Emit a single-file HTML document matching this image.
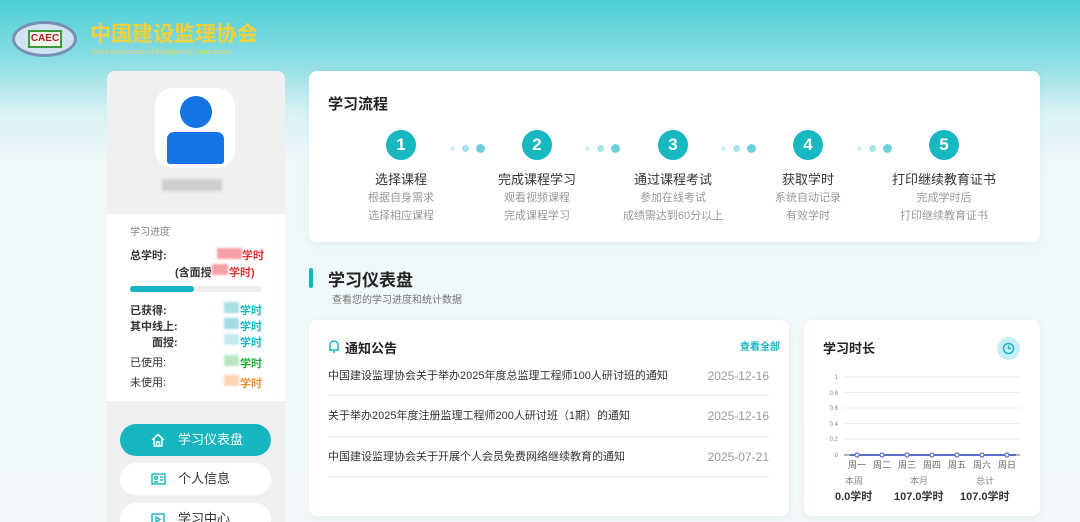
<!DOCTYPE html>
<html style="background:#f2f8f9"><head><meta charset="utf-8"><style>
*{margin:0;padding:0;box-sizing:border-box}
html,body{width:1080px;height:522px;overflow:hidden}
body{position:relative;font-family:"Liberation Sans","Noto Sans CJK SC",sans-serif;background:linear-gradient(180deg,#4ccfd8 0px,#8adde3 60px,#d6f2f4 110px,#eef8f9 160px,#f2f8f9 522px) no-repeat;background-size:1080px 522px;color:#333}
.a{position:absolute}
.card{position:absolute;background:#fff;border-radius:8px;box-shadow:0 2px 8px rgba(0,80,90,.06)}
.step{position:absolute;width:150px;text-align:center}
.circ{width:30px;height:30px;border-radius:50%;background:#17b8c2;color:#fff;font-weight:bold;font-size:17px;line-height:30px;margin:0 auto}
.st{font-size:13px;color:#333;margin-top:9px;line-height:18px}
.sd{font-size:11px;color:#999;line-height:18px}
.dots{position:absolute;top:140px}
.dots i{display:inline-block;border-radius:50%;margin-right:7px;vertical-align:middle}
.lbl{position:absolute;font-size:11px;font-weight:bold;color:#333}
.blur{position:absolute;height:11px;filter:blur(1px)}
.unit{position:absolute;font-size:11px;font-weight:bold}
.nav{position:absolute;left:120px;width:151px;height:32px;border-radius:16px;font-size:13px;line-height:32px}
.row{position:absolute;left:328px;width:441px;font-size:11px;color:#333;border-bottom:1px solid #eee;height:41px;line-height:14px;padding-top:0}
.row span{position:absolute;right:0;top:0;color:#999;font-size:12px}
</style></head><body>
<!-- logo -->
<div class="a" style="left:12px;top:21px;width:65px;height:36px;border-radius:50%;border:3px solid #7a8fb5;background:#cfe3f0"></div>
<div class="a" style="left:28px;top:30px;width:34px;height:18px;border:2px solid #3c9a3c;background:#f1f6e9;font-size:10px;font-weight:bold;color:#b0202a;text-align:center;line-height:14px">CAEC</div>
<div class="a" style="left:90px;top:22px;font-size:21px;line-height:26px;font-weight:bold;color:#f4d13a">中国建设监理协会</div>
<div class="a" style="left:90px;top:49px;font-size:7px;line-height:8px;color:#e8d070">China Association of Engineering Consultants</div>
<!-- sidebar -->
<div class="a" style="left:107px;top:71px;width:178px;height:460px;background:#f0f0f0;border-radius:8px"></div>
<div class="a" style="left:155px;top:88px;width:80px;height:80px;background:#fff;border-radius:18px"></div>
<div class="a" style="left:180px;top:96px;width:32px;height:32px;border-radius:50%;background:#1474e4"></div>
<div class="a" style="left:167px;top:132px;width:57px;height:32px;border-radius:7px 7px 3px 3px;background:#1474e4"></div>
<div class="a" style="left:162px;top:179px;width:60px;height:12px;background:#ccc;filter:blur(1.5px)"></div>
<div class="a" style="left:107px;top:214px;width:178px;height:187px;background:#fff"></div>
<div class="a" style="left:130px;top:223px;font-size:10px;color:#888">学习进度</div>
<div class="lbl" style="left:130px;top:247px">总学时:</div>
<div class="blur" style="left:217px;top:248px;width:25px;background:#f7a0a8"></div>
<div class="unit" style="left:242px;top:247px;color:#e03030">学时</div>
<div class="lbl" style="left:175px;top:264px">(含面授</div>
<div class="blur" style="left:212px;top:264px;width:16px;background:#f7a0a8"></div>
<div class="unit" style="left:229px;top:264px;color:#e03030">学时)</div>
<div class="a" style="left:130px;top:286px;width:132px;height:6px;border-radius:3px;background:#eee"></div>
<div class="a" style="left:130px;top:286px;width:64px;height:6px;border-radius:3px;background:#17b5c0"></div>
<div class="lbl" style="left:130px;top:302px">已获得:</div>
<div class="lbl" style="left:130px;top:318px">其中线上:</div>
<div class="lbl" style="left:152px;top:334px">面授:</div>
<div class="lbl" style="left:130px;top:354px;font-weight:normal">已使用:</div>
<div class="lbl" style="left:130px;top:374px;font-weight:normal">未使用:</div>
<div class="blur" style="left:224px;top:302px;width:15px;background:#a8dfe3"></div>
<div class="blur" style="left:224px;top:318px;width:15px;background:#9fdbe0"></div>
<div class="blur" style="left:224px;top:334px;width:15px;background:#c6ebee"></div>
<div class="blur" style="left:224px;top:355px;width:15px;background:#b8e6c2"></div>
<div class="blur" style="left:224px;top:375px;width:15px;background:#fcd3b5"></div>
<div class="unit" style="left:240px;top:302px;color:#17b5c0">学时</div>
<div class="unit" style="left:240px;top:318px;color:#17b5c0">学时</div>
<div class="unit" style="left:240px;top:334px;color:#17b5c0">学时</div>
<div class="unit" style="left:240px;top:355px;color:#22aa33">学时</div>
<div class="unit" style="left:240px;top:375px;color:#f08a30">学时</div>
<div class="nav" style="top:424px;background:#17b5c0;color:#fff"><svg class="a" style="left:31px;top:9px" width="14" height="14" viewBox="0 0 14 14" fill="none" stroke="#fff" stroke-width="1.5"><path d="M1 7L7 1.5 13 7M3 5.5V13H11V5.5M5.5 13V9H8.5V13"/></svg><span class="a" style="left:58px">学习仪表盘</span></div>
<div class="nav" style="top:463px;background:#fff;color:#333"><svg class="a" style="left:31px;top:10px" width="15" height="12" viewBox="0 0 15 12" fill="none" stroke="#17b5c0" stroke-width="1.4"><rect x="1" y="1" width="13" height="10"/><circle cx="5" cy="5" r="1.5"/><path d="M3 9h4M9 4h3M9 7h3"/></svg><span class="a" style="left:58px">个人信息</span></div>
<div class="nav" style="top:503px;background:#fff;color:#333"><svg class="a" style="left:31px;top:10px" width="14" height="13" viewBox="0 0 14 13" fill="none" stroke="#17b5c0" stroke-width="1.4"><rect x="1" y="1" width="12" height="11"/><path d="M5 4l4 2.5L5 9z"/></svg><span class="a" style="left:58px">学习中心</span></div>
<!-- flow card -->
<div class="card" style="left:309px;top:71px;width:731px;height:171px"></div>
<div class="a" style="left:328px;top:93px;font-size:15px;font-weight:bold;color:#222">学习流程</div>
<div class="step" style="left:326px;top:130px"><div class="circ">1</div><div class="st" style="margin-top:11px">选择课程</div><div class="sd">根据自身需求<br>选择相应课程</div></div>
<div class="step" style="left:462px;top:130px"><div class="circ">2</div><div class="st" style="margin-top:11px">完成课程学习</div><div class="sd">观看视频课程<br>完成课程学习</div></div>
<div class="step" style="left:598px;top:130px"><div class="circ">3</div><div class="st" style="margin-top:11px">通过课程考试</div><div class="sd">参加在线考试<br>成绩需达到60分以上</div></div>
<div class="step" style="left:733px;top:130px"><div class="circ">4</div><div class="st" style="margin-top:11px">获取学时</div><div class="sd">系统自动记录<br>有效学时</div></div>
<div class="step" style="left:869px;top:130px"><div class="circ">5</div><div class="st" style="margin-top:11px">打印继续教育证书</div><div class="sd">完成学时后<br>打印继续教育证书</div></div>
<div class="dots" style="left:450px"><i style="width:5px;height:5px;background:#cdeff1"></i><i style="width:7px;height:7px;background:#a7e3e7"></i><i style="width:9px;height:9px;background:#6fd1d8"></i></div>
<div class="dots" style="left:585px"><i style="width:5px;height:5px;background:#cdeff1"></i><i style="width:7px;height:7px;background:#a7e3e7"></i><i style="width:9px;height:9px;background:#6fd1d8"></i></div>
<div class="dots" style="left:721px"><i style="width:5px;height:5px;background:#cdeff1"></i><i style="width:7px;height:7px;background:#a7e3e7"></i><i style="width:9px;height:9px;background:#6fd1d8"></i></div>
<div class="dots" style="left:857px"><i style="width:5px;height:5px;background:#cdeff1"></i><i style="width:7px;height:7px;background:#a7e3e7"></i><i style="width:9px;height:9px;background:#6fd1d8"></i></div>
<!-- dashboard title -->
<div class="a" style="left:309px;top:268px;width:4px;height:20px;background:#17b5c0;border-radius:2px"></div>
<div class="a" style="left:328px;top:266px;font-size:17px;font-weight:bold;color:#222">学习仪表盘</div>
<div class="a" style="left:332px;top:291px;font-size:10px;color:#777">查看您的学习进度和统计数据</div>
<!-- notice card -->
<div class="card" style="left:309px;top:320px;width:480px;height:196px"></div>
<svg class="a" style="left:328px;top:339px" width="12" height="14" viewBox="0 0 12 14" fill="none" stroke="#17b5c0" stroke-width="1.4"><path d="M2 11V6a4 4 0 018 0v5H1h10M5 13h2"/></svg>
<div class="a" style="left:345px;top:338px;font-size:13px;font-weight:bold;color:#222">通知公告</div>
<div class="a" style="left:740px;top:338px;font-size:10px;font-weight:bold;color:#17b5c0">查看全部</div>
<div class="row" style="top:369px;height:27px">中国建设监理协会关于举办2025年度总监理工程师100人研讨班的通知<span>2025-12-16</span></div>
<div class="row" style="top:409px;height:28px">关于举办2025年度注册监理工程师200人研讨班（1期）的通知<span>2025-12-16</span></div>
<div class="row" style="top:450px;height:27px">中国建设监理协会关于开展个人会员免费网络继续教育的通知<span>2025-07-21</span></div>
<!-- chart card -->
<div class="card" style="left:804px;top:320px;width:236px;height:196px"></div>
<div class="a" style="left:823px;top:338px;font-size:13px;font-weight:bold;color:#222">学习时长</div>
<div class="a" style="left:997px;top:337px;width:23px;height:23px;border-radius:50%;background:#c9eff2"></div>
<svg class="a" style="left:1002px;top:342px" width="13" height="13" viewBox="0 0 13 13" fill="none" stroke="#17b5c0" stroke-width="1.5"><circle cx="6.5" cy="6.5" r="5"/><path d="M6.5 3.5v3h2.5"/></svg>
<svg class="a" style="left:804px;top:370px" width="236" height="110" font-family="Liberation Sans" font-size="6" fill="#888">
<g stroke="#eee" stroke-width="1"><line x1="40" x2="216" y1="7" y2="7"/><line x1="40" x2="216" y1="22.5" y2="22.5"/><line x1="40" x2="216" y1="38" y2="38"/><line x1="40" x2="216" y1="53.5" y2="53.5"/><line x1="40" x2="216" y1="69" y2="69"/></g>
<text x="34" y="9" text-anchor="end">1</text><text x="34" y="25" text-anchor="end">0.8</text><text x="34" y="40" text-anchor="end">0.6</text><text x="34" y="56" text-anchor="end">0.4</text><text x="34" y="71" text-anchor="end">0.2</text><text x="34" y="87" text-anchor="end">0</text>
<line x1="40" x2="216" y1="85" y2="85" stroke="#666"/>
<line x1="46" x2="212" y1="85" y2="85" stroke="#5b6fc8" stroke-width="2"/>
<g fill="#fff" stroke="#5b6fc8" stroke-width="1.2"><circle cx="53" cy="85" r="2"/><circle cx="78" cy="85" r="2"/><circle cx="103" cy="85" r="2"/><circle cx="128" cy="85" r="2"/><circle cx="153" cy="85" r="2"/><circle cx="178" cy="85" r="2"/><circle cx="203" cy="85" r="2"/></g>
<g font-size="9" fill="#666" text-anchor="middle"><text x="53" y="98">周一</text><text x="78" y="98">周二</text><text x="103" y="98">周三</text><text x="128" y="98">周四</text><text x="153" y="98">周五</text><text x="178" y="98">周六</text><text x="203" y="98">周日</text></g>
</svg>
<div class="a" style="left:845px;top:474px;font-size:9px;color:#888">本周</div>
<div class="a" style="left:910px;top:474px;font-size:9px;color:#888">本月</div>
<div class="a" style="left:976px;top:474px;font-size:9px;color:#888">总计</div>
<div class="a" style="left:835px;top:488px;font-size:11px;font-weight:bold;color:#333">0.0学时</div>
<div class="a" style="left:894px;top:488px;font-size:11px;font-weight:bold;color:#333">107.0学时</div>
<div class="a" style="left:960px;top:488px;font-size:11px;font-weight:bold;color:#333">107.0学时</div>
</body></html>
